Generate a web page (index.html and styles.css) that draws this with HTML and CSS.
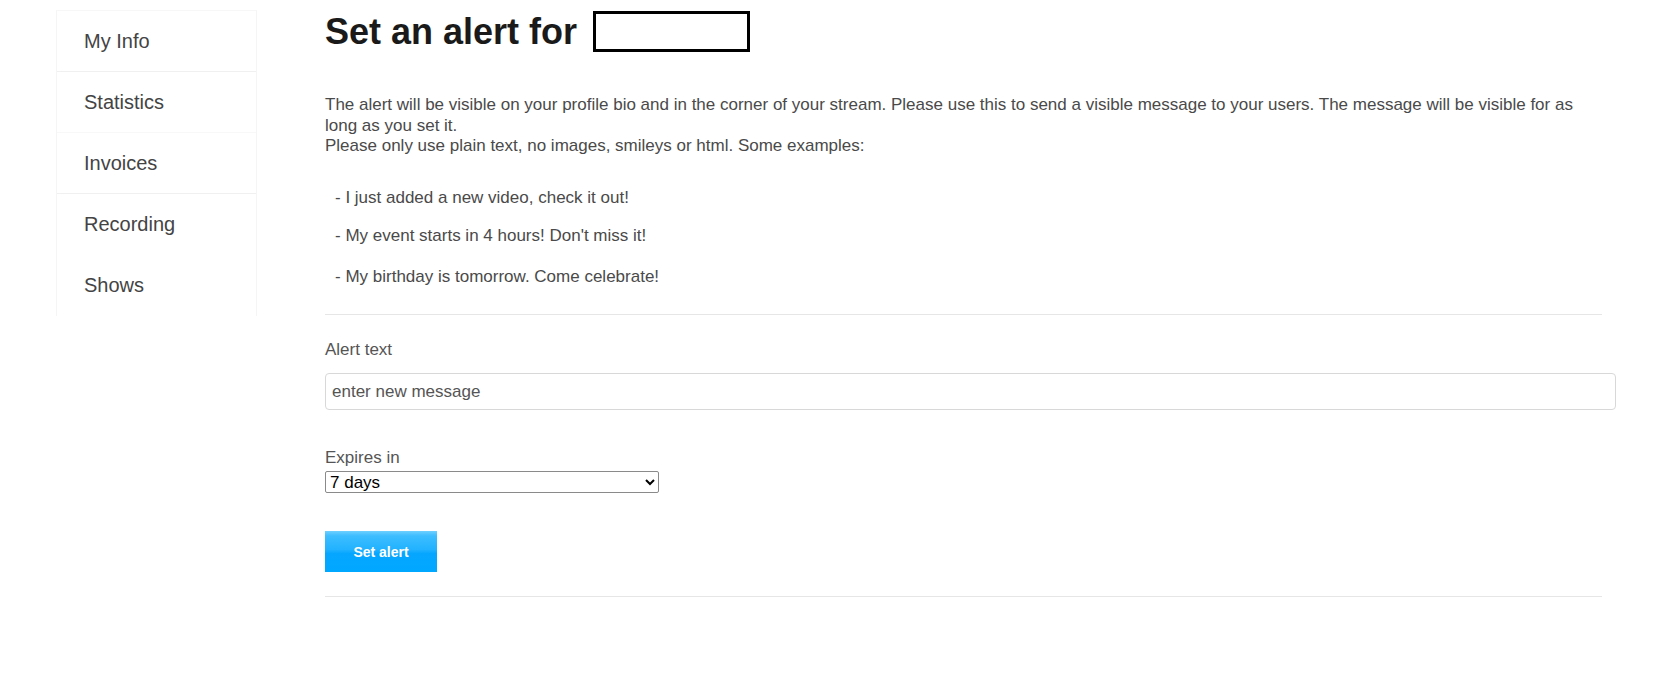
FILE: index.html
```html
<!DOCTYPE html>
<html lang="en">
<head>
<meta charset="utf-8">
<title>Set an alert</title>
<link rel="stylesheet" href="styles.css">
</head>
<body>
<div class="page">
  <nav class="sidebar">
    <a class="nav-item line" href="#">My Info</a>
    <a class="nav-item faint" href="#">Statistics</a>
    <a class="nav-item line" href="#">Invoices</a>
    <a class="nav-item" href="#">Recording</a>
    <a class="nav-item" href="#">Shows</a>
  </nav>
  <main class="main">
    <h1 class="title"><span>Set an alert for</span><span class="redacted"></span></h1>
    <p class="intro">The alert will be visible on your profile bio and in the corner of your stream. Please use this to send a visible message to your users. The message will be visible for as long as you set it.<br>Please only use plain text, no images, smileys or html. Some examples:</p>
    <div class="examples">
      <div class="example">- I just added a new video, check it out!</div>
      <div class="example">- My event starts in 4 hours! Don't miss it!</div>
      <div class="example">- My birthday is tomorrow. Come celebrate!</div>
    </div>
    <hr class="sep">
    <form class="form">
      <label class="label" for="alert">Alert text</label>
      <input class="text-input" id="alert" type="text" placeholder="enter new message">
      <label class="label expires" for="exp">Expires in</label>
      <select class="select" id="exp">
        <option>7 days</option>
      </select>
      <button class="btn" type="button">Set alert</button>
    </form>
    <hr class="sep bottom">
  </main>
</div>
</body>
</html>
```

FILE: styles.css
```css
* { box-sizing: content-box; }
html, body { margin: 0; padding: 0; background: #fff; }
body { font-family: "Liberation Sans", Arial, sans-serif; color: #444; }

.page { display: flex; align-items: flex-start; }

.sidebar {
  margin-left: 56px;
  margin-top: 10px;
  width: 199px;
  border-left: 1px solid #f5f5f5;
  border-right: 1px solid #f5f5f5;
  border-top: 1px solid #f7f7f7;
  display: flex;
  flex-direction: column;
}
.nav-item {
  display: flex;
  align-items: center;
  height: 60px;
  padding-left: 27px;
  font-size: 20px;
  color: #444;
  text-decoration: none;
  border-bottom: 1px solid transparent;
}
.nav-item.line { border-bottom-color: #f0f0f0; }
.nav-item.faint { border-bottom-color: #f8f8f8; }

.main {
  margin-left: 68px;
  width: 1277px;
  padding-top: 11px;
}

.title {
  margin: 0;
  display: flex;
  align-items: center;
  gap: 16px;
  height: 41px;
  font-size: 36px;
  font-weight: bold;
  color: #1a1a1a;
}
.redacted {
  display: block;
  width: 151px;
  height: 35px;
  border: 3px solid #000;
}

.intro {
  margin: 43px 0 0;
  font-size: 17px;
  line-height: 20.5px;
  color: #4a4a4a;
}

.examples { margin-top: 31px; padding-left: 10px; }
.example {
  font-size: 17px;
  line-height: 20.5px;
  color: #4a4a4a;
}
.example + .example { margin-top: 18px; }
.example:last-child { margin-top: 20px; }

.sep {
  margin: 27px 0 0;
  border: 0;
  border-top: 1px solid #e6e6e6;
  height: 0;
}
.sep.bottom { margin-top: 24px; }

.form { display: flex; flex-direction: column; align-items: flex-start; }
.label {
  font-size: 17px;
  line-height: 20px;
  color: #555;
}
.form .label:first-child { margin-top: 25px; }

.text-input {
  margin-top: 13px;
  width: 1277px;
  height: 23px;
  padding: 6px;
  border: 1px solid #d8d8d8;
  border-radius: 4px;
  font-family: "Liberation Sans", Arial, sans-serif;
  font-size: 17px;
  color: #333;
  outline: none;
}
.text-input::placeholder { color: #555; }

.label.expires { margin-top: 38px; }

.select {
  margin-top: 3px;
  width: 334px;
  height: 22px;
  font-family: "Liberation Sans", Arial, sans-serif;
  font-size: 17px;
  color: #000;
  border: 1px solid #8a8a8a;
  border-radius: 2px;
  background: #fff;
  padding: 0;
  box-sizing: border-box;
}

.btn {
  margin-top: 38px;
  width: 112px;
  height: 41px;
  border: 0;
  padding: 0;
  background: linear-gradient(to bottom, #6fd0ff 0%, #3dbdff 12%, #22b2ff 45%, #06a6ff 55%, #00a8ff 100%);
  color: #fff;
  font-family: "Liberation Sans", Arial, sans-serif;
  font-size: 14px;
  font-weight: bold;
  box-sizing: border-box;
  cursor: pointer;
}
```
